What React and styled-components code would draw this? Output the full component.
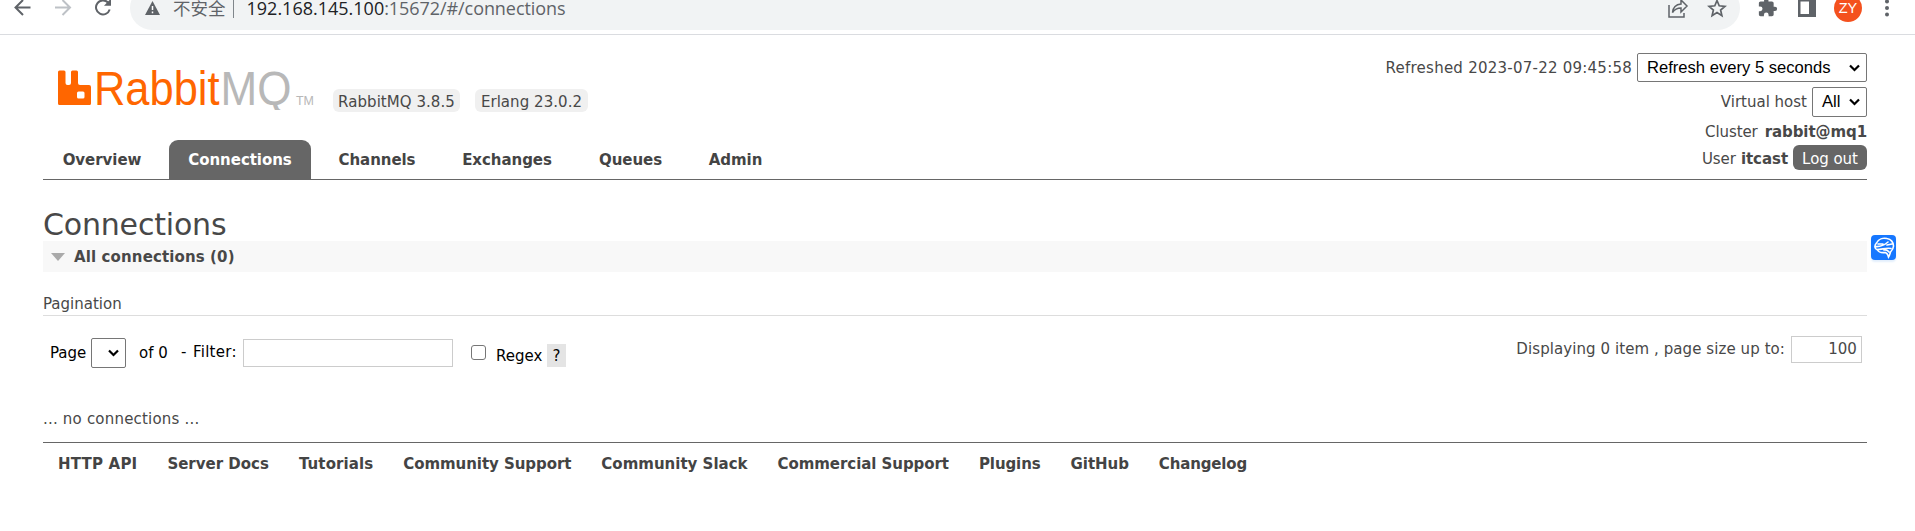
import React from "react";
import styled, { createGlobalStyle, css } from "styled-components";

const Global = createGlobalStyle`
  * { box-sizing: border-box; }
  body {
    margin: 0;
    background: #fff;
    color: #484848;
    font: 15px/20px "DejaVu Sans", Verdana, sans-serif;
    overflow: hidden;
  }
  svg { display: block; flex: none; }
`;

const Page = styled.div`
  height: 531px;
  overflow: hidden;
`;

/* Browser toolbar */
const Toolbar = styled.div`
  display: flex;
  align-items: flex-start;
  height: 35px;
  border-bottom: 1px solid #dadce0;
  color: #5f6368;
  overflow: hidden;
`;
const NavIcons = styled.div`
  display: flex;
  width: 130px;
  padding-left: 11px;
  gap: 20px;
`;
const AddressBar = styled.div`
  display: flex;
  align-items: center;
  width: 1610px;
  height: 44px;
  margin-top: -14px;
  padding: 0 13px 0 15px;
  border-radius: 22px;
  background: #f1f3f4;
  font: 18px/24px "Open Sans", "Noto Sans CJK SC", sans-serif;
  white-space: pre;
`;
const Warning = styled.span`
  margin-left: 13px;
  font: 17.5px/24px "Noto Sans CJK SC", sans-serif;
`;
const Separator = styled.i`
  width: 1px;
  height: 20px;
  margin: 0 13px 0 7px;
  background: #80868b;
`;
const Host = styled.span`
  color: #202124;
`;
const Path = styled.span`
  letter-spacing: -0.07px;
`;
const BarActions = styled.div`
  display: flex;
  gap: 18px;
  margin-left: auto;
  align-items: center;
`;
const ToolActions = styled.div`
  display: flex;
  align-items: center;
  height: 44px;
  margin-top: -14px;
  padding-left: 18px;
  gap: 20px;
`;
const Avatar = styled.span`
  flex: none;
  width: 28px;
  height: 28px;
  margin: 0 3px 0 -2px;
  border-radius: 50%;
  background: #f4511e;
  color: #fff;
  font: 14.5px/28px "Liberation Sans", sans-serif;
  text-align: center;
`;

/* Management header */
const Header = styled.header`
  display: flex;
  justify-content: space-between;
  height: 145px;
  margin: 0 48px 0 43px;
  border-bottom: 1px solid #666;
`;
const Left = styled.div`
  display: flex;
  flex-direction: column;
  justify-content: space-between;
`;
const Brand = styled.div`
  display: flex;
  padding: 30px 0 0 12px;
`;
const Versions = styled.div`
  display: flex;
  gap: 15px;
  padding: 24px 0 0 15px;
`;
const Version = styled.span`
  width: ${(p) => p.$w}px;
  height: 23px;
  border-radius: 6px;
  background: #f0f0f0;
  line-height: 26px;
  text-align: center;
  letter-spacing: 0.05px;
  white-space: nowrap;
`;
const Tabs = styled.nav`
  display: flex;
  gap: 8px;
`;
const Tab = styled.a`
  width: ${(p) => p.$w}px;
  height: 39px;
  border-radius: 9px 9px 0 0;
  font-weight: bold;
  line-height: 40px;
  text-align: center;
  letter-spacing: -0.05px;
  color: #444;
  ${(p) => p.$active && css`background: #666; color: #fff;`}
`;
const Status = styled.div`
  display: flex;
  flex-direction: column;
  align-items: flex-end;
  padding-top: 18px;
`;
const StatusRow = styled.div`
  display: flex;
  align-items: ${(p) => p.$align || "center"};
  gap: ${(p) => p.$space || 5}px;
  height: ${(p) => p.$h}px;
  margin-bottom: ${(p) => p.$gap || 0}px;
  letter-spacing: ${(p) => p.$ls || 0}px;
`;
const SelectBox = styled.span`
  display: flex;
  align-items: center;
  justify-content: space-between;
  width: ${(p) => p.$w}px;
  height: ${(p) => p.$h}px;
  padding: 0 6px 0 9px;
  border: 1px solid #767676;
  border-radius: 2px;
  background: #fff;
  color: #000;
  font: 16.6px/20px "Liberation Sans", Arial, sans-serif;
  letter-spacing: 0;
`;
const LogOut = styled.span`
  width: 74px;
  height: 25px;
  border-radius: 6px;
  background: #666;
  color: #fff;
  line-height: 28px;
  text-align: center;
`;

/* Content */
const Main = styled.main`
  margin: 0 48px 0 43px;
`;
const Title = styled.h1`
  margin: 0;
  padding-top: 25px;
  height: 61px;
  font-size: 30px;
  font-weight: normal;
  line-height: 40px;
  letter-spacing: -0.18px;
`;
const SectionBar = styled.h2`
  display: flex;
  align-items: center;
  gap: 9px;
  height: 31px;
  margin: 0;
  padding-left: 8px;
  background: #f8f8f8;
  font-size: 15px;
  letter-spacing: 0.12px;
`;
const SubHeading = styled.div`
  height: 44px;
  padding-top: 22px;
  border-bottom: 1px solid #ddd;
`;
const Pager = styled.div`
  display: flex;
  justify-content: space-between;
  height: 93px;
  padding: 20px 5px 0 7px;
`;
const Filters = styled.div`
  display: flex;
  align-items: flex-start;
  color: #000;
  white-space: pre;
`;
const Label = styled.span`
  width: ${(p) => p.$w}px;
  padding-top: ${(p) => p.$top}px;
  ${(p) => p.$ls && css`letter-spacing: ${p.$ls}px;`}
`;
const Offset = styled.div`
  padding-top: ${(p) => p.$top}px;
  margin-right: ${(p) => p.$right || 0}px;
`;
const Field = styled.span`
  display: block;
  width: ${(p) => p.$w}px;
  height: ${(p) => p.$h}px;
  padding-right: 4px;
  border: 1px solid #ccc;
  background: #fff;
  line-height: 25px;
  text-align: right;
`;
const Check = styled.span`
  display: block;
  width: 15px;
  height: 15px;
  border: 1px solid #767676;
  border-radius: 3px;
`;
const Help = styled.span`
  display: block;
  width: 19px;
  height: 23px;
  background: #e4e4e4;
  line-height: 25px;
  text-align: center;
`;
const PageSize = styled.div`
  display: flex;
  gap: 6px;
  align-items: flex-start;
  letter-spacing: 0.08px;
`;
const Empty = styled.div`
  height: 33px;
  letter-spacing: 0.2px;
`;
const Footer = styled.footer`
  display: flex;
  gap: 30px;
  margin: 0 48px 0 43px;
  padding: 11px 0 0 15px;
  border-top: 1px solid #666;
  font-weight: bold;
  white-space: nowrap;
  color: #444;
`;
const FootLink = styled.a`
  letter-spacing: ${(p) => p.$ls}px;
`;
const Assistant = styled.div`
  position: absolute;
  left: 1871px;
  top: 235px;
  width: 25px;
  height: 25px;
  border-radius: 4px;
  background: #1677ff;
  box-shadow: 0 2px 2px #e3effc;
`;

const Chevron = () => (
  <svg width="11" height="8" viewBox="0 0 11 8">
    <path d="M1 1.500 5.500 6 10 1.500" fill="none" stroke="#000" strokeWidth="2.200" />
  </svg>
);

const Logo = () => (
  <svg width="263" height="45" viewBox="55 65 263 45">
    <path
      fill="#f60"
      fillRule="evenodd"
      d="M59.500 70.500h4.500q1.500 0 1.500 1.500v11q0 2 2 2h1.500q2 0 2-2v-11q0-1.500 1.500-1.500h4q1.500 0 1.500 1.500v11q0 2 2 2h9q2 0 2 2v16.500q0 1.500-1.500 1.500h-30q-1.500 0-1.500-1.500v-31.500q0-1.500 1.500-1.500zM78.500 91.500q-1.500 0-1.500 1.500v4q0 1.500 1.500 1.500h4.500q1.500 0 1.500-1.500v-4q0-1.500-1.500-1.500z"
    />
    <text x="94" y="105.300" fontFamily="Liberation Sans" fontSize="48.500" fill="#f60" textLength="125.500" lengthAdjust="spacingAndGlyphs">Rabbit</text>
    <text x="220.500" y="105.300" fontFamily="Liberation Sans" fontSize="48.500" fill="#b8b8b8" textLength="71" lengthAdjust="spacingAndGlyphs">MQ</text>
    <text x="296" y="105" fontFamily="Liberation Sans" fontSize="13" fill="#b8b8b8" textLength="18" lengthAdjust="spacingAndGlyphs">TM</text>
  </svg>
);

const tabs = [["Overview", 118], ["Connections", 142, 1], ["Channels", 116], ["Exchanges", 128], ["Queues", 103], ["Admin", 91]];
const links = [
  ["HTTP API", 0.2],
  ["Server Docs", 0],
  ["Tutorials", 0.1],
  ["Community Support", -0.06],
  ["Community Slack", 0],
  ["Commercial Support", -0.06],
  ["Plugins", -0.1],
  ["GitHub", -0.05],
  ["Changelog", -0.15],
];

export default function App() {
  return (
    <Page>
      <Global />
      <Toolbar>
        <NavIcons>
          <svg width="22" height="22" viewBox="0 -2.500 22 22" fill="none" stroke="#5f6368" strokeWidth="2"><path d="M19.500 5H5M12 -2.500 4.500 5 12 12.500" /></svg>
          <svg width="22" height="22" viewBox="0 -2.500 22 22" fill="none" stroke="#bdc1c6" strokeWidth="2"><path d="M2 5H16.500M9.500 -2.500 17 5 9.500 12.500" /></svg>
          <svg width="22" height="22" viewBox="0 -2.500 22 22" fill="none" stroke="#5f6368" strokeWidth="2"><path d="M13 0A7 7 0 1 0 14.700 7" /><path d="M16-4V3.200H9z" fill="#5f6368" stroke="none" /></svg>
        </NavIcons>
        <AddressBar>
          <svg width="15" height="14" viewBox="0 0 15 14"><path d="M7.500 0 15 14H0z" fill="#5f6368" /><path d="M7.500 5v4M7.500 10.500v1.700" stroke="#fff" strokeWidth="1.500" /></svg>
          <Warning>不安全</Warning>
          <Separator />
          <Host>192.168.145.100</Host>
          <Path>:15672/#/connections</Path>
          <BarActions>
            <svg width="22" height="22" viewBox="0 0 22 22" fill="none" stroke="#5f6368" strokeWidth="1.500"><path d="M2 8v12h15v-4M5.500 15.500c.5-5 3-8 8.500-8.500V3l6 6-6 6v-4c-4 0-6.500 1.500-8.500 4.500z" /></svg>
            <svg width="20" height="20" viewBox="0 0 20 20" fill="none" stroke="#5f6368" strokeWidth="1.700"><path d="m10 2.500 2.200 5.300 5.700.5-4.300 3.700 1.300 5.600-4.900-3-4.900 3L6.400 12 2.100 8.300l5.700-.5z" /></svg>
          </BarActions>
        </AddressBar>
        <ToolActions>
          <svg width="20" height="20" viewBox="1 1 23 23" fill="#5f6368"><path d="M20.500 11H19V7c0-1.100-.9-2-2-2h-4V3.500a2.500 2.500 0 0 0-5 0V5H4c-1.100 0-2 .9-2 2v3.800h1.500a2.700 2.700 0 0 1 0 5.400H2V20c0 1.100.9 2 2 2h3.800v-1.500a2.700 2.700 0 0 1 5.400 0V22H17c1.100 0 2-.9 2-2v-4h1.500a2.500 2.500 0 0 0 0-5z" /></svg>
          <svg width="18" height="18" viewBox="0 0 18 18"><path fill="#5f6368" fillRule="evenodd" d="M0 0h18v18H0zM2.500 2.500v12.500H11v-12.500z" /></svg>
          <Avatar>ZY</Avatar>
          <svg width="4" height="20" viewBox="0 0 4 20" fill="#5f6368"><circle cx="2" cy="3.500" r="2" /><circle cx="2" cy="10" r="2" /><circle cx="2" cy="16.500" r="2" /></svg>
        </ToolActions>
      </Toolbar>
      <Header>
        <Left>
          <Brand>
            <Logo />
            <Versions><Version $w={127}>RabbitMQ 3.8.5</Version><Version $w={113}>Erlang 23.0.2</Version></Versions>
          </Brand>
          <Tabs>{tabs.map(([t, w, a]) => <Tab key={t} $w={w} $active={a}>{t}</Tab>)}</Tabs>
        </Left>
        <Status>
          <StatusRow $h={29} $gap={5} $ls={0.24}>Refreshed 2023-07-22 09:45:58<SelectBox $w={230} $h={29}>Refresh every 5 seconds<Chevron /></SelectBox></StatusRow>
          <StatusRow $h={30} $gap={5}>Virtual host<SelectBox $w={55} $h={30}>All<Chevron /></SelectBox></StatusRow>
          <StatusRow $h={20} $gap={3} $ls={-0.08} $space={7}>Cluster <b>rabbit@mq1</b></StatusRow>
          <StatusRow $h={25} $align="baseline" $ls={-0.05}>User <b>itcast</b><LogOut>Log out</LogOut></StatusRow>
        </Status>
      </Header>
      <Main>
        <Title>Connections</Title>
        <SectionBar><svg width="14" height="8" viewBox="0 0 14 8"><path d="M0 0h14L7 8z" fill="#aaa" /></svg>All connections (0)</SectionBar>
        <SubHeading>Pagination</SubHeading>
        <Pager>
          <Filters>
            <Label $w={41} $top={7}>Page</Label>
            <Offset $top={2} $right={13}><SelectBox $w={35} $h={30}><span /><Chevron /></SelectBox></Offset>
            <Label $w={42} $top={7}>of 0</Label><Label $w={12} $top={6}>-</Label><Label $w={50} $top={6} $ls={0.25}>Filter:</Label>
            <Offset $top={3} $right={18}><Field $w={210} $h={28} /></Offset>
            <Offset $top={9} $right={10}><Check /></Offset>
            <Label $w={51} $top={10}>Regex</Label>
            <Offset $top={8}><Help>?</Help></Offset>
          </Filters>
          <PageSize><Label $top={3}>Displaying 0 item , page size up to:</Label><Field $w={71} $h={27}>100</Field></PageSize>
        </Pager>
        <Empty>... no connections ...</Empty>
      </Main>
      <Footer>{links.map(([t, ls]) => <FootLink key={t} $ls={ls}>{t}</FootLink>)}</Footer>
      <Assistant>
        <svg width="25" height="25" viewBox="0 0 25 25" fill="none" stroke="#fff" strokeWidth="1.600" strokeLinecap="round"><path d="M17.500 22c-.5-2-1-3.500-3-4.500-4 .5-7-.5-8-2.500-3-1-3.500-4.500-1-7C7.500 4 12 2.500 16 3.500c4 .5 6.500 4 6.500 7.500 0 3-1.500 4.500-3 6-.5 2-1 3.500-2 5zM4 11.500c5 .5 9-1 13-4.500M6 14.500c5 0 9-2 14-1M7 9h5M13 15c2-.5 4 .5 5 2M16 10l5-1" /></svg>
      </Assistant>
    </Page>
  );
}
